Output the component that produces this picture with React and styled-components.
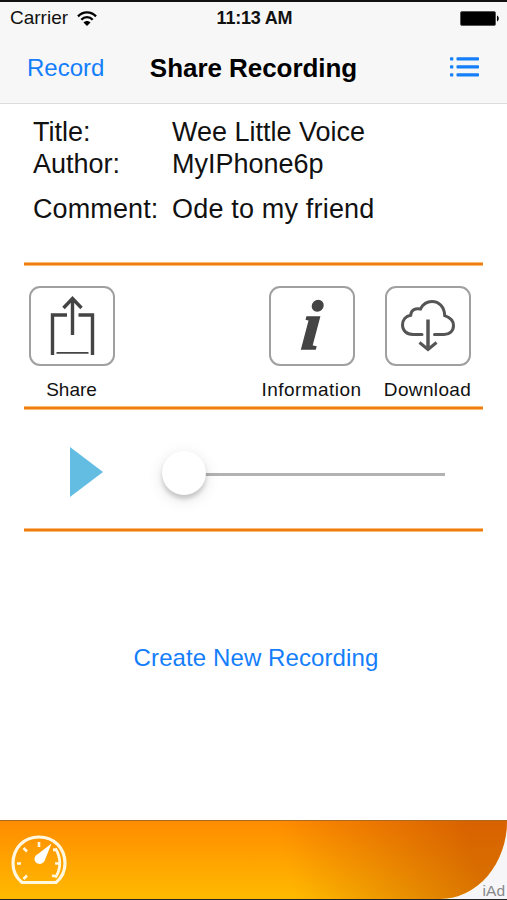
import React, { useState } from 'react';
import styled, { createGlobalStyle } from 'styled-components';

const GlobalStyle = createGlobalStyle`
  * {
    box-sizing: border-box;
  }

  body {
    margin: 0;
    background: #fff;
    font-family: 'Liberation Sans', Arial, sans-serif;
    color: #111;
  }
`;

const Screen = styled.div`
  display: flex;
  flex-direction: column;
  width: 507px;
  height: 900px;
  overflow: hidden;
  background-color: #fff;
  border-top: 2px solid #111;
`;

const Header = styled.header`
  height: 102px;
  background-color: #f7f7f7;
  border-bottom: 1px solid #dcdcdc;
`;

const StatusBar = styled.div`
  display: grid;
  grid-template-columns: 1fr auto 1fr;
  align-items: center;
  height: 32px;
  padding: 0 8px 0 10px;
  font-size: 19px;
`;

const Carrier = styled.div`
  display: flex;
  align-items: center;
  gap: 9px;
`;

const Time = styled.div`
  font-size: 18px;
  font-weight: bold;
  letter-spacing: -0.2px;
`;

const Battery = styled.svg`
  justify-self: end;
`;

const NavBar = styled.nav`
  display: grid;
  grid-template-columns: 1fr auto 1fr;
  align-items: center;
  height: 68px;
  padding: 0 27px 0 27px;
`;

const LinkButton = styled.button`
  border: none;
  background: none;
  padding: 0;
  color: #147efb;
  font-family: inherit;
  font-size: 24px;
  line-height: 28px;
  letter-spacing: ${(props) => props.$spacing || '0'};
  text-align: left;
  cursor: pointer;
`;

const MenuButton = styled(LinkButton)`
  display: flex;
  justify-self: end;
  margin-top: -3px;
`;

const Title = styled.h1`
  margin: 0;
  font-size: 26px;
  line-height: 30px;
  letter-spacing: -0.05px;
  color: #000;
`;

const Details = styled.dl`
  display: grid;
  grid-template-columns: 139px 1fr;
  grid-template-rows: 32px 32px 58px;
  align-items: center;
  margin: 0;
  padding: 12px 0 0 33px;
  height: 158px;
  font-size: 27px;
  line-height: 32px;
`;

const Term = styled.dt`
  letter-spacing: ${(props) => props.$spacing || '0'};
  white-space: nowrap;
`;

const Value = styled.dd`
  margin: 0;
  letter-spacing: ${(props) => props.$spacing || '0'};
  white-space: nowrap;
`;

const Divider = styled.hr`
  flex: none;
  width: 459px;
  height: 4px;
  margin: 0 0 0 24px;
  border: solid #fbbd73;
  border-width: 1px 0;
  background-color: #ee7b13;
`;

const Actions = styled.div`
  display: grid;
  grid-template-columns: 86px 154px 86px 30px 86px;
  height: 140px;
  padding: 20px 0 0 29px;
`;

const Action = styled.div`
  grid-column: ${(props) => props.$column};
  display: flex;
  flex-direction: column;
  align-items: center;
`;

const ActionButton = styled.button`
  display: flex;
  align-items: center;
  justify-content: center;
  flex: none;
  width: 86px;
  height: 80px;
  padding: 0;
  border: 2px solid #a0a0a0;
  border-radius: 11px;
  background-color: #fff;
  cursor: pointer;
`;

const ActionLabel = styled.span`
  margin: 13px 1px 0 0;
  font-size: 19px;
  line-height: 22px;
  letter-spacing: ${(props) => props.$spacing || '0'};
  white-space: nowrap;
`;

const InfoMark = styled.span`
  color: #444;
  font: italic bold 70px/74px 'Liberation Serif', serif;
  -webkit-text-stroke: 1.5px #444;
  transform: skewX(-5deg);
`;

const Player = styled.div`
  display: flex;
  align-items: center;
  height: 118px;
  padding: 10px 61px 0 69px;
`;

const PlayButton = styled.button`
  display: flex;
  margin: -4px 58px 0 0;
  padding: 0;
  border: none;
  background: none;
  cursor: pointer;
`;

const Slider = styled.input`
  appearance: none;
  flex: 1;
  min-width: 0;
  height: 46px;
  margin: 0;
  background: linear-gradient(#b2b2b2, #b2b2b2) 8px 22px / calc(100% - 9px) 3px no-repeat;

  &::-webkit-slider-thumb {
    appearance: none;
    width: 44px;
    height: 44px;
    margin-top: -2px;
    border-radius: 50%;
    background: #fff;
    box-shadow: 0 4px 4px rgba(0, 0, 0, 0.16), 0 4px 16px rgba(0, 0, 0, 0.12);
  }
`;

const CreateRow = styled.div`
  display: flex;
  flex: 1;
  align-items: flex-start;
  justify-content: center;
  padding: 112px 0 0 5px;
`;

const AdBanner = styled.footer`
  position: relative;
  height: 80px;
  background-color: #f6f6f8;
  border-bottom: 1px solid #222;
`;

const AdContent = styled.div`
  display: flex;
  align-items: center;
  height: 79px;
  padding: 0 0 0 11px;
  border-top: 1px solid #ad6a1c;
  border-bottom-right-radius: 67px 78px;
  background: linear-gradient(75deg, transparent 56%, rgba(193, 72, 0, 0.62) 92%),
    linear-gradient(#ff8c00, #ffba00);
`;

const AdTag = styled.span`
  position: absolute;
  right: 2px;
  bottom: 0;
  color: #88888c;
  font-size: 15.5px;
  line-height: 16px;
`;

const WifiIcon = () => (
  <svg width="20" height="15" viewBox="0 0 20 15" fill="none" stroke="#000" strokeWidth="2.3">
    <path d="M1 5.4C6 .1 14 .1 19 5.4" />
    <path d="M4.3 8.7c3.2-3.4 8.2-3.4 11.4 0" />
    <path d="M6.5 11.4c2-2 5-2 7 0L10 15z" fill="#000" stroke="none" />
  </svg>
);

const ListIcon = () => (
  <svg width="30" height="20" viewBox="0 0 30 20" fill="#147efb">
    {[0, 8, 16].map((y) => (
      <React.Fragment key={y}>
        <rect x="0" y={y + 0.3} width="3.3" height="3.3" rx="0.8" />
        <rect x="6.5" y={y + 0.3} width="22.5" height="3.3" rx="0.8" />
      </React.Fragment>
    ))}
  </svg>
);

const ShareIcon = () => (
  <svg width="46" height="60" viewBox="0 0 46 60" fill="none" stroke="#444">
    <path d="M18 19H3.500v40M29.500 19H43.500v40" strokeWidth="3.4" />
    <path d="M23.500 39V2.500M14.500 12L23.500 2.500l9 9.500" strokeWidth="3.4" />
    <path d="M7.500 56.800h32" strokeWidth="1.7" />
  </svg>
);

const DownloadIcon = () => (
  <svg width="54" height="52" viewBox="0 0 54 52" fill="none" stroke="#555" strokeWidth="3">
    <path
      d="M21 34.500H12C5 34.500 1.500 30 1.500 25c0-5 3.300-9 8.200-9.800C10 10.500 14 7.700 19.500 9 22 4 26 1.500 31 1.500c7 0 12.500 5.500 12.700 14.200C49.500 17.700 52.500 21 52.500 25.500c0 5.500-4 9-9.500 9H33.500"
      strokeLinecap="round"
    />
    <path d="M27 19.500v28" strokeWidth="3.500" />
    <path d="M18.500 42.500l8.500 7 8.500-7" />
  </svg>
);

const GaugeIcon = () => (
  <svg width="56" height="50" viewBox="0 0 56 50" fill="none" stroke="#fff7df" strokeWidth="3.2">
    <path d="M11 47.500C5 42.500 2 36 2 28.500 2 13 13 2 28 2s26 11 26 26.500c0 7.500-3 14-9 19z" strokeLinejoin="round" />
    <path d="M28 7v5M6 28.500h4M12.500 13l3.500 3.500M12.500 44l3.500-3.500M44 28.500h4" strokeWidth="2.600" />
    <path d="M42 15l3-.5c5 8 5 19 0 27l-4-1" strokeWidth="2.800" />
    <path d="M40.500 8.500L33.500 26c-3 5-10 3-10-2 0-2.500 1.500-4 3.500-5z" fill="#fff" stroke="none" />
  </svg>
);

const ShareRecording = () => {
  const [position, setPosition] = useState(0);

  return (
    <Screen>
      <Header>
        <StatusBar>
          <Carrier>
            Carrier
            <WifiIcon />
          </Carrier>
          <Time>11:13 AM</Time>
          <Battery width="39" height="15" viewBox="0 0 39 15">
            <rect x="0.5" y="0.5" width="35" height="14" rx="1.5" stroke="#555" />
            <path d="M37 4.500c2.300 1 2.300 5 0 6z" />
          </Battery>
        </StatusBar>
        <NavBar>
          <LinkButton>Record</LinkButton>
          <Title>Share Recording</Title>
          <MenuButton aria-label="Recordings">
            <ListIcon />
          </MenuButton>
        </NavBar>
      </Header>

      <Details>
        <Term>Title:</Term>
        <Value>Wee Little Voice</Value>
        <Term>Author:</Term>
        <Value>MyIPhone6p</Value>
        <Term $spacing="0.1px">Comment:</Term>
        <Value $spacing="0.18px">Ode to my friend</Value>
      </Details>

      <Divider />
      <Actions>
        <Action $column={1}>
          <ActionButton aria-label="Share">
            <ShareIcon />
          </ActionButton>
          <ActionLabel>Share</ActionLabel>
        </Action>
        <Action $column={3}>
          <ActionButton aria-label="Information">
            <InfoMark>i</InfoMark>
          </ActionButton>
          <ActionLabel $spacing="0.45px">Information</ActionLabel>
        </Action>
        <Action $column={5}>
          <ActionButton aria-label="Download">
            <DownloadIcon />
          </ActionButton>
          <ActionLabel $spacing="0.35px">Download</ActionLabel>
        </Action>
      </Actions>

      <Divider />
      <Player>
        <PlayButton aria-label="Play">
          <svg width="35" height="52" viewBox="0 0 35 52" fill="#63bde3">
            <path d="M1 1l33 25L1 51z" />
          </svg>
        </PlayButton>
        <Slider
          type="range"
          min="0"
          max="100"
          value={position}
          onChange={(e) => setPosition(Number(e.target.value))}
        />
      </Player>
      <Divider />

      <CreateRow>
        <LinkButton $spacing="0.1px">Create New Recording</LinkButton>
      </CreateRow>

      <AdBanner>
        <AdContent>
          <GaugeIcon />
        </AdContent>
        <AdTag>iAd</AdTag>
      </AdBanner>
    </Screen>
  );
};

const App = () => (
  <>
    <GlobalStyle />
    <ShareRecording />
  </>
);

export default App;
